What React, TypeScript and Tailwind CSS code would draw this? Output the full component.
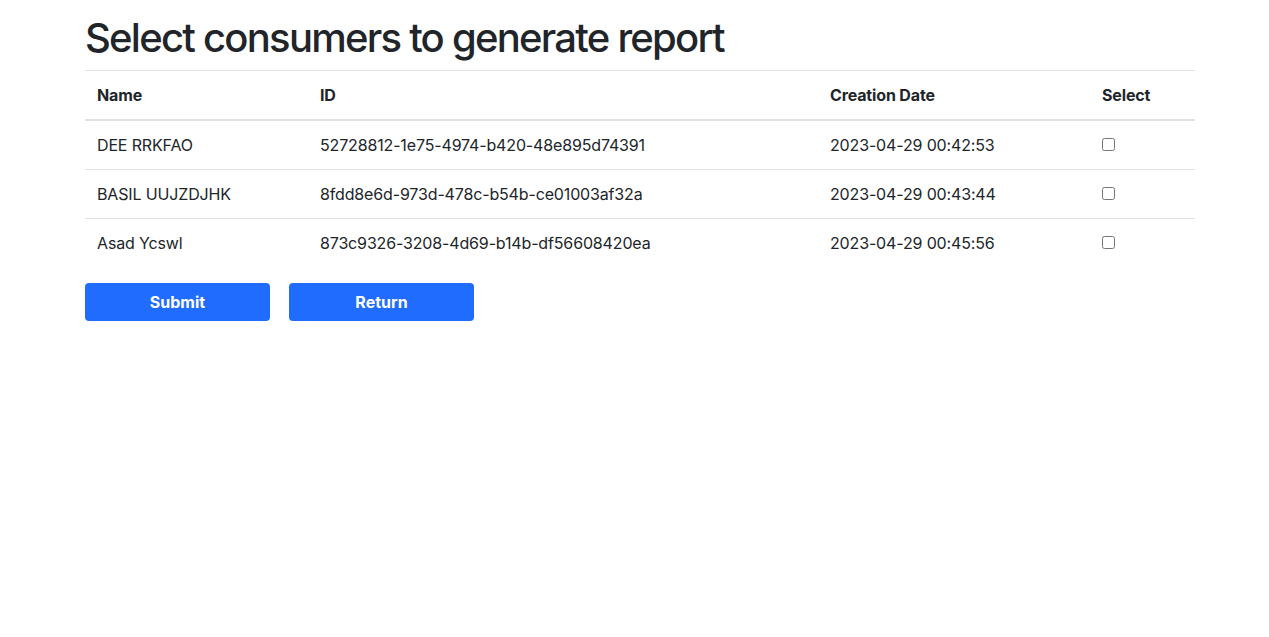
import React from "react";

const rows = [
  ["DEE RRKFAO", "52728812-1e75-4974-b420-48e895d74391", "2023-04-29 00:42:53"],
  ["BASIL UUJZDJHK", "8fdd8e6d-973d-478c-b54b-ce01003af32a", "2023-04-29 00:43:44"],
  ["Asad Ycswl", "873c9326-3208-4d69-b14b-df56608420ea", "2023-04-29 00:45:56"],
];

export default function App() {
  return (
    <div className="min-h-[637px] bg-white text-[#212529] font-['Inter',sans-serif]">
      <div className="ml-[85px] w-[1110px] pt-[14px]">
        <h1 className="text-[40px] leading-[48px] font-medium mb-2 tracking-[-1.75px]">
          Select consumers to generate report
        </h1>
        <table className="w-full border-collapse text-[16px] leading-6 mb-4 tracking-[-0.15px]">
          <colgroup>
            <col className="w-[223px]" />
            <col className="w-[510px]" />
            <col className="w-[272px]" />
            <col className="w-[105px]" />
          </colgroup>
          <thead>
            <tr>
              {["Name", "ID", "Creation Date", "Select"].map((h) => (
                <th
                  key={h}
                  className="text-left font-bold p-3 border-t border-b-2 border-[#dee2e6]"
                >
                  {h}
                </th>
              ))}
            </tr>
          </thead>
          <tbody>
            {rows.map((r) => (
              <tr key={r[1]}>
                <td className="p-3 border-t border-[#dee2e6]">{r[0]}</td>
                <td className="p-3 border-t border-[#dee2e6]">{r[1]}</td>
                <td className="p-3 border-t border-[#dee2e6]">{r[2]}</td>
                <td className="p-3 border-t border-[#dee2e6]">
                  <input type="checkbox" className="w-[13px] h-[13px] align-top mt-[5px] m-0" />
                </td>
              </tr>
            ))}
          </tbody>
        </table>
        <div className="flex gap-[19px]">
          <button className="w-[185px] h-[38px] rounded bg-[#1f6cfe] text-white font-bold text-[16px]">
            Submit
          </button>
          <button className="w-[185px] h-[38px] rounded bg-[#1f6cfe] text-white font-bold text-[16px]">
            Return
          </button>
        </div>
      </div>
    </div>
  );
}
